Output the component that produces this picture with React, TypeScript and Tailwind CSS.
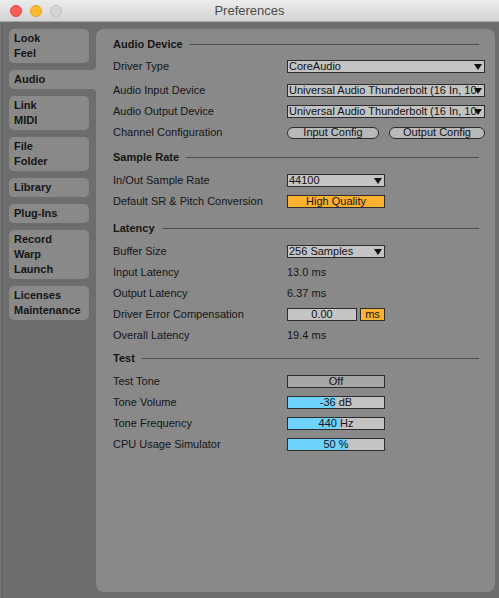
import type { ReactNode } from 'react';

const font = { fontFamily: '"Liberation Sans", Arial, sans-serif' };

function Arrow() {
  return (
    <svg width="8" height="6" viewBox="0 0 8 6" className="shrink-0">
      <polygon points="0,0 8,0 4,6" fill="#111" />
    </svg>
  );
}

function Dropdown({ value, wide = false }: { value: string; wide?: boolean }) {
  return (
    <div
      className={`flex h-[13px] items-center border border-[#2c2c2c] bg-[#c4c4c4] pl-[1px] pr-[2px] text-[11px] leading-none text-[#111] ${
        wide ? 'w-[198px]' : 'w-[98px]'
      }`}
    >
      <span className="min-w-0 flex-1 whitespace-nowrap">{value}</span>
      <Arrow />
    </div>
  );
}

function Box({ value, className = '' }: { value: string; className?: string }) {
  return (
    <div
      className={`flex h-[13px] items-center justify-center border border-[#2c2c2c] text-[11px] leading-none text-[#111] ${className}`}
    >
      {value}
    </div>
  );
}

function Meter({ value, fill }: { value: string; fill: number }) {
  return (
    <div className="relative flex h-[13px] w-[98px] items-center justify-center border border-[#2c2c2c] bg-[#c3c3c3] text-[11px] leading-none text-[#111]">
      <div className="absolute inset-y-0 left-0 bg-[#6fd3fd]" style={{ width: fill }} />
      <span className="relative">{value}</span>
    </div>
  );
}

function Header({ title, className = '' }: { title: string; className?: string }) {
  return (
    <div className={`flex h-[20px] items-center pr-[16px] ${className}`}>
      <span className="text-[11px] font-bold text-[#151515]">{title}</span>
      <div className="ml-[7px] h-px flex-1 bg-[#4e4e4e]" />
    </div>
  );
}

function Row({ label, children, className = '' }: { label: string; children?: ReactNode; className?: string }) {
  return (
    <div className={`flex h-[21px] items-center ${className}`}>
      <span className="w-[174px] shrink-0 text-[11px] text-[#151515]">{label}</span>
      {children}
    </div>
  );
}

function Tab({ lines, active = false }: { lines: string[]; active?: boolean }) {
  return (
    <div
      className={`flex flex-col justify-center py-[2px] pl-[5px] text-[11px] font-bold leading-[15px] text-[#151515] ${
        active ? 'relative w-[87px] rounded-l-[5px] bg-[#898989]' : 'w-[80px] rounded-[5px] bg-[#898989]'
      }`}
    >
      {lines.map((l) => (
        <span key={l}>{l}</span>
      ))}
      {active ? (
        <>
          <div className="absolute right-0 top-[-5px] h-[5px] w-[5px] bg-[radial-gradient(circle_at_0_0,#6d6d6d_5px,#898989_5.5px)]" />
          <div className="absolute bottom-[-5px] right-0 h-[5px] w-[5px] bg-[radial-gradient(circle_at_0_100%,#6d6d6d_5px,#898989_5.5px)]" />
        </>
      ) : null}
    </div>
  );
}

export default function App() {
  return (
    <div className="flex h-[598px] w-[499px] flex-col overflow-hidden bg-[#6d6d6d]" style={font}>
      <div className="relative flex h-[22px] shrink-0 items-center justify-center border-b border-[#a9a9a9] bg-gradient-to-b from-[#ececec] to-[#d4d4d4]">
        <div className="absolute left-[10px] top-[5px] flex gap-[8px]">
          <span className="h-[12px] w-[12px] rounded-full border border-[#e0443e] bg-[#fe5f57]" />
          <span className="h-[12px] w-[12px] rounded-full border border-[#dea123] bg-[#febc2e]" />
          <span className="h-[12px] w-[12px] rounded-full border border-[#c4c4c4] bg-[#d6d6d6]" />
        </div>
        <span className="mt-[1px] text-[13px] text-[#4b4b4b]">Preferences</span>
      </div>

      <div className="flex flex-1">
        <div className="w-[2px] shrink-0 bg-[#717171]" />
        <div className="w-px shrink-0 bg-[#5d5d5d]" />
        <div className="flex flex-1 pb-[6px] pl-[6px] pr-[4px] pt-[7px]">
          <div className="flex w-[87px] shrink-0 flex-col gap-[7px]">
            <Tab lines={['Look', 'Feel']} />
            <Tab lines={['Audio']} active />
            <Tab lines={['Link', 'MIDI']} />
            <Tab lines={['File', 'Folder']} />
            <Tab lines={['Library']} />
            <Tab lines={['Plug-Ins']} />
            <Tab lines={['Record', 'Warp', 'Launch']} />
            <Tab lines={['Licenses', 'Maintenance']} />
          </div>

          <div className="flex flex-1 flex-col rounded-[8px] bg-[#898989] pl-[17px] pt-[5px]">
            <Header title="Audio Device" />
            <Row label="Driver Type" className="mt-[2px]">
              <Dropdown value="CoreAudio" wide />
            </Row>
            <Row label="Audio Input Device" className="mt-[3px]">
              <Dropdown value="Universal Audio Thunderbolt (16 In, 10" wide />
            </Row>
            <Row label="Audio Output Device">
              <Dropdown value="Universal Audio Thunderbolt (16 In, 10" wide />
            </Row>
            <Row label="Channel Configuration">
              <div className="flex gap-[10px]">
                <div className="flex h-[12px] w-[92px] items-center justify-center rounded-full border border-[#2c2c2c] bg-[#b9b9b9] text-[11px] leading-none text-[#111]">
                  Input Config
                </div>
                <div className="flex h-[12px] w-[96px] items-center justify-center rounded-full border border-[#2c2c2c] bg-[#b9b9b9] text-[11px] leading-none text-[#111]">
                  Output Config
                </div>
              </div>
            </Row>

            <Header title="Sample Rate" className="mt-[4px]" />
            <Row label="In/Out Sample Rate" className="mt-[3px]">
              <Dropdown value="44100" />
            </Row>
            <Row label="Default SR & Pitch Conversion">
              <Box value="High Quality" className="w-[98px] bg-[#ffb133]" />
            </Row>

            <Header title="Latency" className="mt-[6px]" />
            <Row label="Buffer Size" className="mt-[3px]">
              <Dropdown value="256 Samples" />
            </Row>
            <Row label="Input Latency">
              <span className="text-[11px] text-[#151515]">13.0 ms</span>
            </Row>
            <Row label="Output Latency">
              <span className="text-[11px] text-[#151515]">6.37 ms</span>
            </Row>
            <Row label="Driver Error Compensation">
              <div className="flex gap-[3px]">
                <Box value="0.00" className="w-[70px] bg-[#c4c4c4]" />
                <Box value="ms" className="w-[25px] bg-[#ffb133]" />
              </div>
            </Row>
            <Row label="Overall Latency">
              <span className="text-[11px] text-[#151515]">19.4 ms</span>
            </Row>

            <Header title="Test" className="mt-[2px]" />
            <Row label="Test Tone" className="mt-[3px]">
              <Box value="Off" className="w-[98px] bg-[#a7a7a7]" />
            </Row>
            <Row label="Tone Volume">
              <Meter value="-36 dB" fill={47} />
            </Row>
            <Row label="Tone Frequency">
              <Meter value="440 Hz" fill={52} />
            </Row>
            <Row label="CPU Usage Simulator">
              <Meter value="50 %" fill={59} />
            </Row>
          </div>
        </div>
      </div>
    </div>
  );
}
